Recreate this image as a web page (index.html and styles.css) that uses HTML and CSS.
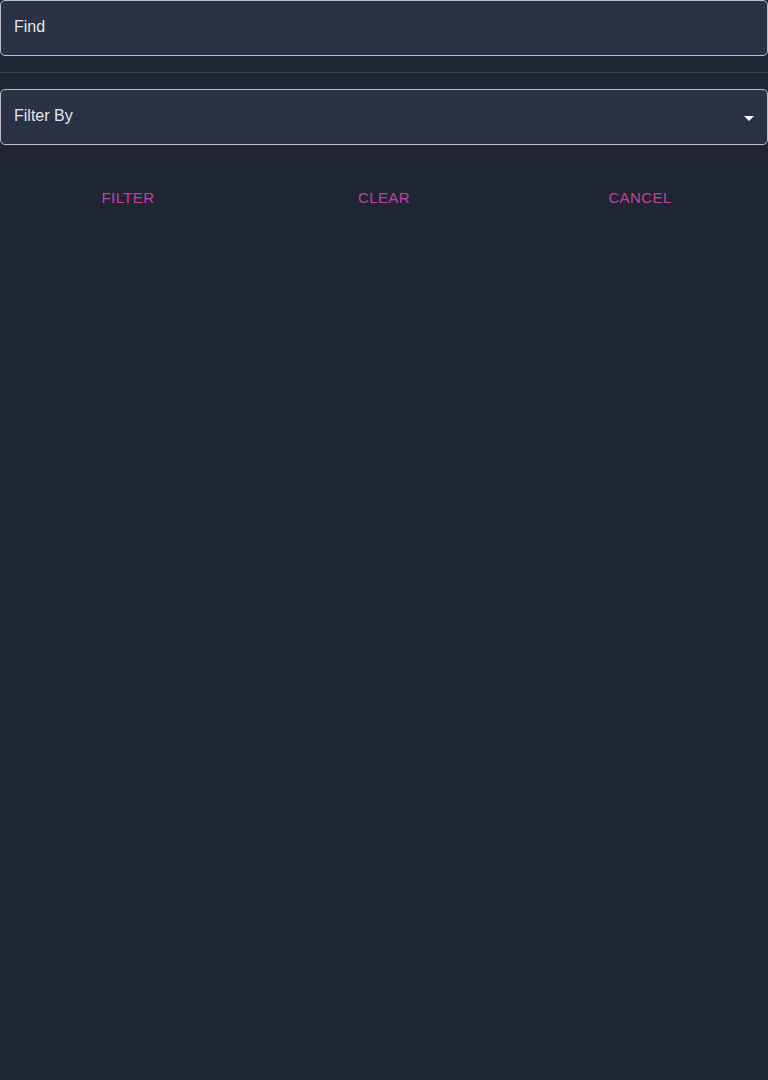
FILE: index.html
```html
<!DOCTYPE html>
<html>
<head>
<meta charset="utf-8">
<link rel="stylesheet" href="styles.css">
</head>
<body>
<div class="page">
  <div class="field">
    <span class="label">Find</span>
  </div>
  <div class="divider"></div>
  <div class="field select">
    <span class="label">Filter By</span>
    <svg class="caret" width="10" height="5" viewBox="0 0 10 5"><path d="M0 0 L10 0 L5 5 Z" fill="#ffffff"/></svg>
  </div>
  <div class="actions">
    <button class="btn">FILTER</button>
    <button class="btn">CLEAR</button>
    <button class="btn">CANCEL</button>
  </div>
</div>
</body>
</html>
```

FILE: styles.css
```css
html, body {
  margin: 0;
  padding: 0;
  background: #202533;
  height: 100%;
}
.page {
  font-family: "Liberation Sans", Arial, sans-serif;
  display: flex;
  flex-direction: column;
}
.field {
  box-sizing: border-box;
  height: 56px;
  border: 1px solid #b9bdc6;
  border-radius: 5px;
  background: #2a3246;
  display: flex;
  align-items: center;
  padding: 0 13px;
  color: #e2e5ea;
  font-size: 16px;
}
.select {
  justify-content: space-between;
  padding-right: 13px;
}
.label {
  position: relative;
  top: -1px;
}
.caret {
  display: block;
  margin-top: 2px;
}
.divider {
  height: 1px;
  background: #3a404d;
  margin: 16px 0;
}
.actions {
  display: grid;
  grid-template-columns: 1fr 1fr 1fr;
  margin-top: 34px;
}
.btn {
  background: none;
  border: none;
  color: #c63fa3;
  font-family: "Liberation Sans", Arial, sans-serif;
  font-size: 15px;
  letter-spacing: 0.4px;
  height: 36px;
  padding: 0;
  cursor: pointer;
}
```
